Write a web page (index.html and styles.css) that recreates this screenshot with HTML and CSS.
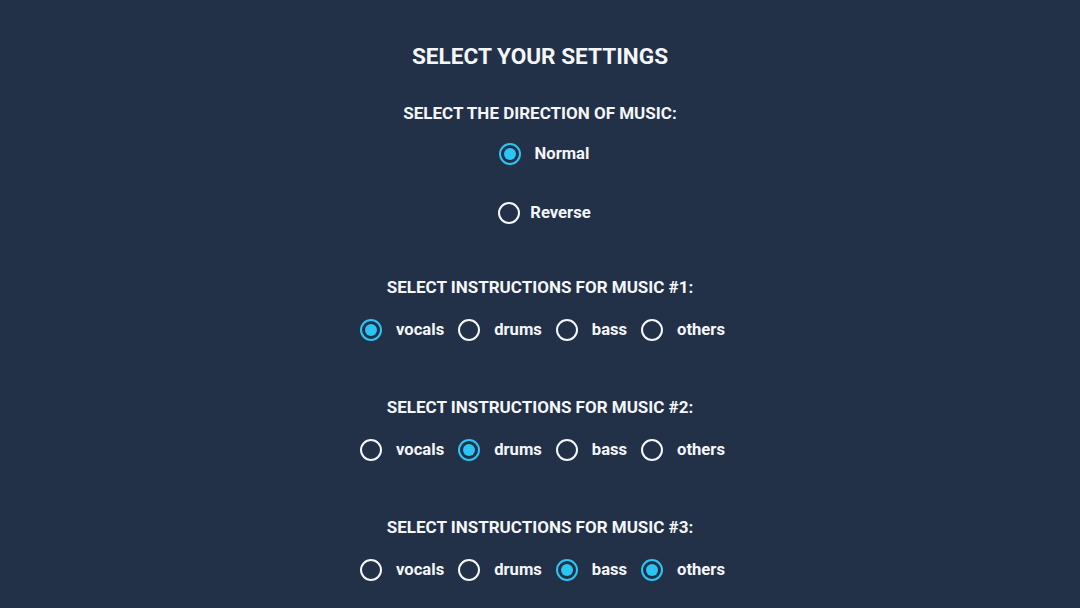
FILE: index.html
```html
<!DOCTYPE html>
<html>
<head>
<meta charset="utf-8">
<link rel="stylesheet" href="styles.css">
</head>
<body>
<main class="settings">
  <h1 class="title">SELECT YOUR SETTINGS</h1>

  <section class="group direction">
    <h2 class="heading">SELECT THE DIRECTION OF MUSIC:</h2>
    <div class="row first"><span class="radio checked"></span><span class="label wide">Normal</span></div>
    <div class="row second"><span class="radio"></span><span class="label">Reverse</span></div>
  </section>

  <section class="group">
    <h2 class="heading">SELECT INSTRUCTIONS FOR MUSIC #1:</h2>
    <div class="row options">
      <span class="opt"><span class="radio checked"></span><span class="label wide">vocals</span></span>
      <span class="opt"><span class="radio"></span><span class="label wide">drums</span></span>
      <span class="opt"><span class="radio"></span><span class="label wide">bass</span></span>
      <span class="opt"><span class="radio"></span><span class="label wide">others</span></span>
    </div>
  </section>

  <section class="group">
    <h2 class="heading">SELECT INSTRUCTIONS FOR MUSIC #2:</h2>
    <div class="row options">
      <span class="opt"><span class="radio"></span><span class="label wide">vocals</span></span>
      <span class="opt"><span class="radio checked"></span><span class="label wide">drums</span></span>
      <span class="opt"><span class="radio"></span><span class="label wide">bass</span></span>
      <span class="opt"><span class="radio"></span><span class="label wide">others</span></span>
    </div>
  </section>

  <section class="group">
    <h2 class="heading">SELECT INSTRUCTIONS FOR MUSIC #3:</h2>
    <div class="row options">
      <span class="opt"><span class="radio"></span><span class="label wide">vocals</span></span>
      <span class="opt"><span class="radio"></span><span class="label wide">drums</span></span>
      <span class="opt"><span class="radio checked"></span><span class="label wide">bass</span></span>
      <span class="opt"><span class="radio checked"></span><span class="label wide">others</span></span>
    </div>
  </section>
</main>
</body>
</html>
```

FILE: styles.css
```css
html, body {
  margin: 0;
  padding: 0;
  background: #223148;
  height: 100%;
}
body {
  font-family: Roboto, "Liberation Sans", sans-serif;
  color: #f4f6f8;
  overflow: hidden;
}
.settings {
  display: flex;
  flex-direction: column;
  align-items: center;
  padding-top: 43px;
}
.title {
  margin: 0;
  font-size: 22.6px;
  line-height: 28px;
  font-weight: 700;
}
.group {
  display: flex;
  flex-direction: column;
  align-items: center;
  margin-top: 55px;
}
.group.direction {
  margin-top: 32px;
}
.direction + .group {
  margin-top: 52px;
}
.heading {
  margin: 0 0 21px;
  font-size: 17px;
  line-height: 20px;
  font-weight: 700;
}
.direction .heading {
  margin-bottom: 19px;
}
.row {
  display: flex;
  align-items: center;
  height: 24px;
}
.row.first {
  padding-left: 8px;
}
.row.second {
  margin-top: 35px;
  padding-left: 9px;
}
.radio {
  box-sizing: border-box;
  width: 22px;
  height: 22px;
  border: 2px solid #f4f6f8;
  border-radius: 50%;
  display: flex;
  align-items: center;
  justify-content: center;
  flex: none;
}
.radio.checked {
  border-color: #2bc4f3;
}
.radio.checked::after {
  content: "";
  width: 12px;
  height: 12px;
  border-radius: 50%;
  background: #2bc4f3;
}
.label {
  margin-left: 10px;
  font-size: 16.6px;
  font-weight: 700;
  line-height: 24px;
}
.label.wide {
  margin-left: 14px;
}
.options {
  gap: 14px;
  padding-left: 5px;
}
.opt {
  display: flex;
  align-items: center;
}
```
